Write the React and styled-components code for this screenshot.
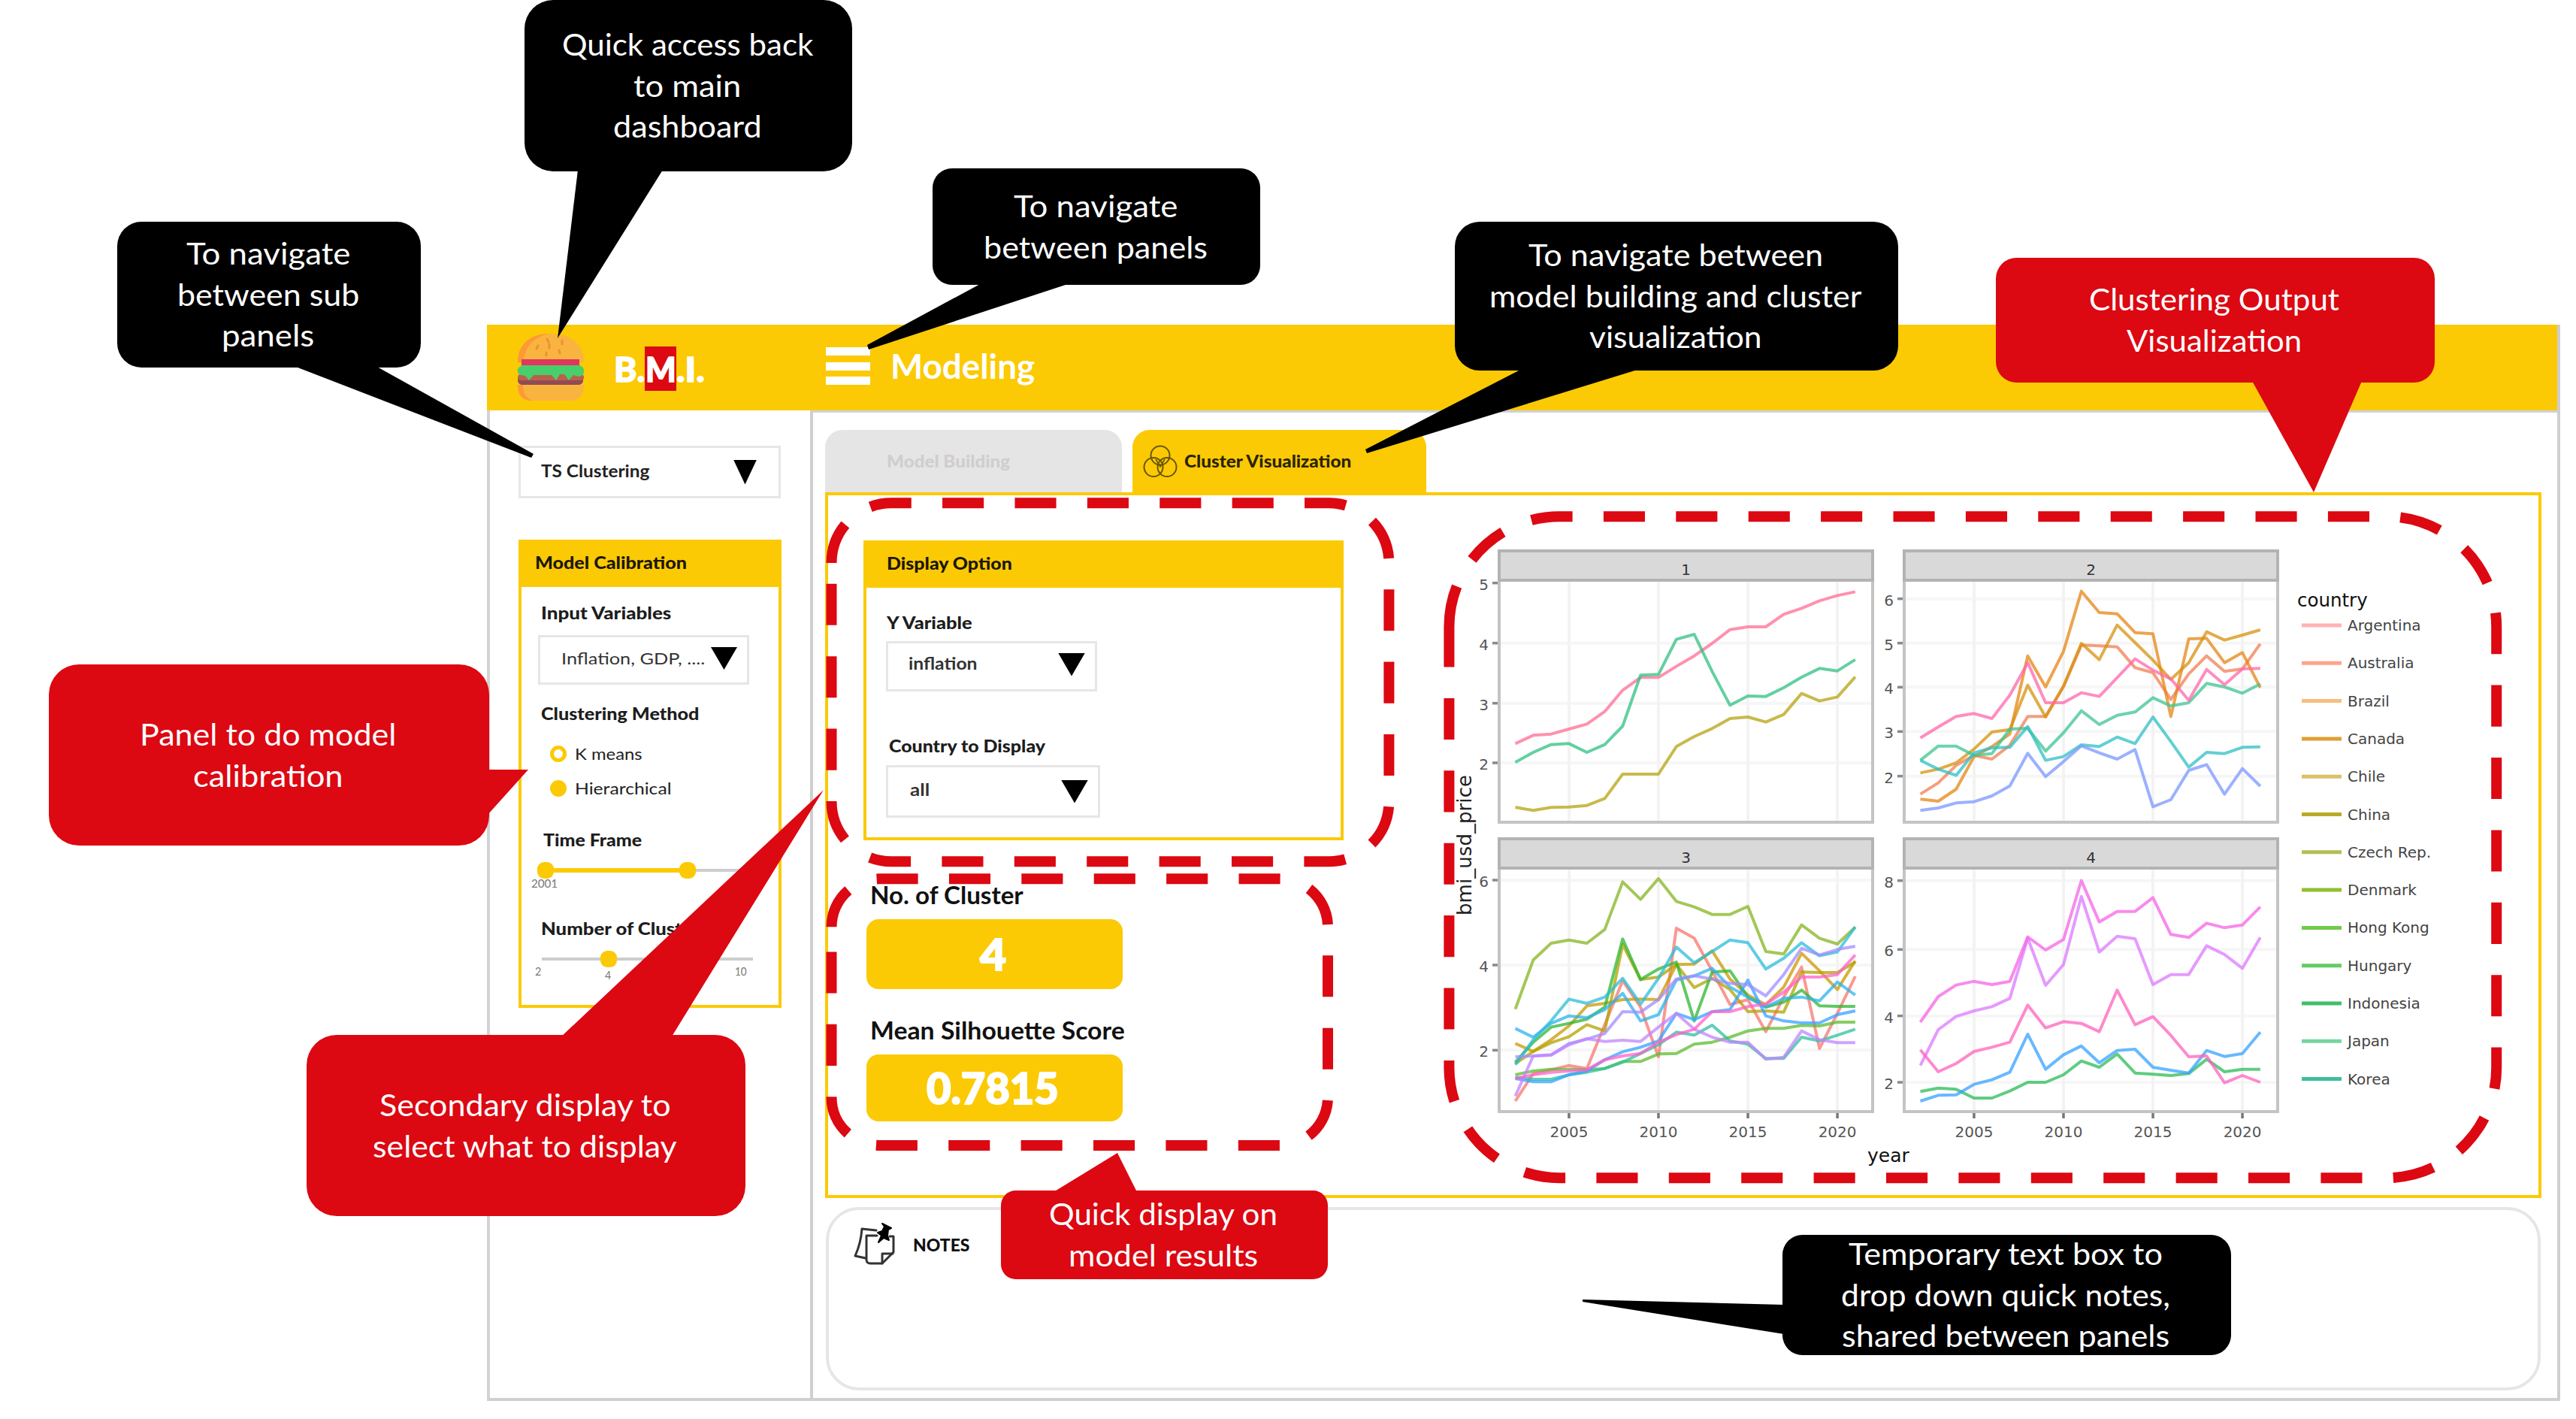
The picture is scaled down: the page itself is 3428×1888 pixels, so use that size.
import React, { useLayoutEffect, useRef, useState } from "react";
import styled, { createGlobalStyle } from "styled-components";

const YELLOW = "#fbca04";
const RED = "#dc0812";
const SANS = `Lato, "Open Sans", sans-serif`;
const CHART_FONT = `"DejaVu Sans", sans-serif`;

const GlobalStyle = createGlobalStyle`
  *, *::before, *::after { box-sizing: border-box; }
  body { margin: 0; background: #fff; font-family: ${SANS}; color: #111; }
`;

/* ---------- text set to a given measure ---------- */

const FitBox = styled.span`
  display: block;
  flex: none;
  width: ${(p) => p.$w}px;
  white-space: pre;
`;
const FitInner = styled.span`
  display: inline-block;
  transform-origin: 0 50%;
`;

function Fit({ w, children }) {
  const ref = useRef(null);
  const [scale, setScale] = useState(1);
  useLayoutEffect(() => {
    const natural = ref.current.offsetWidth;
    if (natural) setScale(w / natural);
  }, [w, children]);
  return (
    <FitBox $w={w}>
      <FitInner ref={ref} style={{ transform: `scaleX(${scale})` }}>
        {children}
      </FitInner>
    </FitBox>
  );
}

/* ---------- application frame ---------- */

const Page = styled.div`
  position: relative;
  width: 3428px;
  height: 1888px;
  overflow: hidden;
  padding: 432px 0 0 648px;
  background: #fff;
`;
const Frame = styled.div`
  width: 2759px;
  height: 1432px;
  display: flex;
  flex-direction: column;
  border-right: 4px solid #d0ced2;
  border-bottom: 4px solid #cfcfcf;
`;
const Header = styled.header`
  height: 114px;
  display: flex;
  align-items: center;
  padding-left: 40px;
  background: ${YELLOW};
  color: #fff;
`;
const Brand = styled.div`
  display: flex;
  align-items: center;
  margin-left: 39px;
  margin-right: 1px;
  padding-top: 3px;
  font-size: 46px;
  font-weight: 900;
  line-height: 59px;
  -webkit-text-stroke: 1.5px #fff;
`;
const BrandMark = styled.span`
  display: flex;
  justify-content: center;
  width: 42px;
  height: 59px;
  background: ${RED};
`;
const MenuIcon = styled.div`
  width: 59px;
  height: 50px;
  margin: 0 27px 4px 160px;
  display: flex;
  flex-direction: column;
  justify-content: space-between;
`;
const MenuBar = styled.span`
  height: 11px;
  background: #fff;
`;
const PageTitle = styled.h1`
  margin: 0 0 5px;
  font-size: 46px;
  line-height: 56px;
  font-weight: 700;
`;
const Body = styled.div`
  flex: 1;
  display: flex;
`;
const Sidebar = styled.aside`
  width: 430px;
  padding: 47px 0 0 38px;
  border-left: 4px solid #d3d3d3;
`;
const Main = styled.main`
  flex: 1;
  padding: 23px 0 0 16px;
  border-top: 3px solid #cfd0dc;
  border-left: 4px solid #cfcfcf;
`;

/* ---------- controls ---------- */

const SelectBox = styled.div`
  width: ${(p) => p.$w}px;
  height: ${(p) => p.$h}px;
  margin-top: ${(p) => p.$mt || 0}px;
  padding: 0 ${(p) => p.$pr}px 0 ${(p) => p.$pl}px;
  display: flex;
  align-items: center;
  justify-content: space-between;
  border: 3px solid #e6e6e6;
  background: #fff;
`;
const SelectText = styled.span`
  padding-bottom: ${(p) => p.$up}px;
  font-size: 22px;
  line-height: 28px;
  font-weight: ${(p) => p.$weight || 400};
  color: ${(p) => p.$color || "#333"};
`;
const Arrow = styled.span`
  width: ${(p) => p.$w || 36}px;
  height: ${(p) => p.$h || 31}px;
  margin-bottom: ${(p) => p.$up || 0}px;
  background: #000;
  clip-path: polygon(0 0, 100% 0, 50% 100%);
`;

function Select({ w, h, mt, pl, pr, text, textW, up, arrow = {}, weight, color }) {
  return (
    <SelectBox $w={w} $h={h} $mt={mt} $pl={pl} $pr={pr}>
      <SelectText $up={up} $weight={weight} $color={color}>
        <Fit w={textW}>{text}</Fit>
      </SelectText>
      <Arrow $w={arrow.w} $h={arrow.h} $up={arrow.up} />
    </SelectBox>
  );
}

const Card = styled.section`
  width: ${(p) => p.$w}px;
  height: ${(p) => p.$h}px;
  margin-top: ${(p) => p.$mt || 0}px;
  border: 4px solid ${YELLOW};
  background: #fff;
`;
const CardTitle = styled.div`
  height: 59px;
  padding: 0 0 7px ${(p) => p.$pl}px;
  display: flex;
  align-items: center;
  background: ${YELLOW};
  font-size: 23px;
  font-weight: 900;
  color: #1c1704;
`;
const CardBody = styled.div`
  padding-left: ${(p) => p.$pl}px;
`;
const Label = styled.div`
  margin: ${(p) => p.$mt}px 0 0 ${(p) => p.$ml || 4}px;
  font-size: 23px;
  line-height: 28px;
  font-weight: 900;
  color: #1d1d1d;
`;
const RadioRow = styled.div`
  display: flex;
  align-items: center;
  gap: 11px;
  height: 28px;
  margin: ${(p) => p.$mt}px 0 0 16px;
  font-size: 22px;
  line-height: 30px;
  color: #222;
`;
const Radio = styled.span`
  width: 22px;
  height: 22px;
  border-radius: 50%;
  border: 5px solid ${YELLOW};
  background: ${(p) => (p.$on ? YELLOW : "#fff")};
`;
const SliderRow = styled.div`
  display: flex;
  align-items: center;
  height: 22px;
  margin: 16px 0 0 ${(p) => p.$ml}px;
`;
const Track = styled.span`
  width: ${(p) => p.$w}px;
  height: ${(p) => (p.$on ? 6 : 4)}px;
  background: ${(p) => (p.$on ? YELLOW : "#cdcdcd")};
`;
const Handle = styled.span`
  width: 22px;
  height: 22px;
  border-radius: 9px;
  background: ${YELLOW};
`;
const ScaleRow = styled.div`
  display: flex;
  margin: ${(p) => p.$mt}px 0 0 ${(p) => p.$ml}px;
  font-size: 16px;
  line-height: 20px;
  color: #777;
`;
const ScaleMark = styled.span`
  margin-left: ${(p) => p.$ml || 0}px;
  padding-top: ${(p) => p.$drop || 0}px;
`;

/* ---------- main area ---------- */

const Tabs = styled.nav`
  display: flex;
  gap: 14px;
`;
const Tab = styled.div`
  width: ${(p) => p.$w}px;
  height: 83px;
  display: flex;
  align-items: center;
  gap: 9px;
  padding: 0 0 0 ${(p) => p.$pl}px;
  border-radius: 23px 23px 0 0;
  background: ${(p) => (p.$active ? YELLOW : "#e5e5e5")};
  color: ${(p) => (p.$active ? "#2b2305" : "#d0cdce")};
  font-size: 22px;
  font-weight: 900;
  line-height: 28px;
`;
const Panel = styled.div`
  width: 2284px;
  height: 939px;
  display: flex;
  border: 4px solid ${YELLOW};
`;
const ResultColumn = styled.div`
  width: 828px;
  padding: 60px 0 0 47px;
`;
const ResultLabel = styled.div`
  margin: ${(p) => p.$mt}px 0 0 9px;
  font-size: 33px;
  line-height: 40px;
  font-weight: 700;
  color: #111;
`;
const ResultValue = styled.div`
  width: 341px;
  height: ${(p) => p.$h}px;
  margin: 13px 0 0 4px;
  display: flex;
  align-items: center;
  justify-content: center;
  padding: 0 5px 2px 0;
  border-radius: 16px;
  background: ${YELLOW};
  color: #fff;
  font-size: 57px;
  font-weight: 900;
  line-height: 70px;
  -webkit-text-stroke: 2px #fff;
`;
const ChartArea = styled.svg`
  display: block;
  width: 1370px;
  height: 840px;
  margin-top: 61px;
  font-family: ${CHART_FONT};
`;
const Notes = styled.section`
  width: 2282px;
  height: 244px;
  margin: 12px 0 0 1px;
  padding: 17px 0 0 33px;
  display: flex;
  align-items: flex-start;
  gap: 22px;
  border: 4px solid #e6e6e6;
  border-radius: 44px;
`;
const NotesTitle = styled.div`
  margin-top: 16px;
  font-size: 22px;
  font-weight: 900;
  line-height: 28px;
`;

/* ---------- annotation layer ---------- */

const Overlay = styled.svg`
  position: absolute;
  left: 0;
  top: 0;
  width: 3428px;
  height: 1888px;
`;
const Bubble = styled.div`
  position: absolute;
  left: ${(p) => p.$x}px;
  top: ${(p) => p.$y}px;
  width: ${(p) => p.$w}px;
  height: ${(p) => p.$h}px;
  display: flex;
  flex-direction: column;
  align-items: center;
  justify-content: center;
  padding-right: 3px;
  border-radius: ${(p) => Math.min(p.$w, p.$h) / 6}px;
  background: ${(p) => p.$bg};
  color: #fff;
  font-size: 41px;
  line-height: 54.8px;
`;

const CALLOUTS = [
  { x: 698, y: 0, w: 436, h: 228, bg: "#000", tail: "769,226 882,226 742,450", lines: [["Quick access back", 334], ["to main", 143], ["dashboard", 198]] },
  { x: 156, y: 295, w: 404, h: 194, bg: "#000", tail: "391,487 500,487 710,604 707,609", lines: [["To navigate", 218], ["between sub", 242], ["panels", 123]] },
  { x: 1241, y: 224, w: 436, h: 155, bg: "#000", tail: "1306,377 1424,377 1156,465 1154,459", lines: [["To navigate", 218], ["between panels", 298]] },
  { x: 1936, y: 295, w: 590, h: 198, bg: "#000", tail: "2025,491 2182,491 1819,603 1817,598", lines: [["To navigate between", 392], ["model building and cluster", 495], ["visualization", 230]] },
  { x: 2656, y: 343, w: 584, h: 166, bg: RED, tail: "2997,507 3143,507 3079,655", lines: [["Clustering Output", 333], ["Visualization", 233]] },
  { x: 65, y: 884, w: 586, h: 241, bg: RED, tail: "649,1024 703,1024 649,1084", lines: [["Panel to do model", 341], ["calibration", 200]] },
  { x: 408, y: 1377, w: 584, h: 241, bg: RED, tail: "747,1379 894,1379 1096,1051", lines: [["Secondary display to", 388], ["select what to display", 405]] },
  { x: 1332, y: 1584, w: 435, h: 118, bg: RED, tail: "1402,1586 1513,1586 1487,1534", lines: [["Quick display on", 304], ["model results", 252]] },
  { x: 2372, y: 1643, w: 597, h: 160, bg: "#000", tail: "2374,1736 2374,1775 2106,1732 2106,1729", lines: [["Temporary text box to", 418], ["drop down quick notes,", 438], ["shared between panels", 436]] },
];

const OUTLINES = [
  { l: 1106.5, t: 669.3, r: 1848.4, b: 1146.2, rad: 79.6 },
  { l: 1106.5, t: 1169.3, r: 1767, b: 1524, rad: 64 },
  { l: 1928.4, t: 687.2, r: 3322.2, b: 1567.2, rad: 146.8 },
];

function outlinePath({ l, t, r, b, rad }) {
  return `M${l} ${t + rad}A${rad} ${rad} 0 0 1 ${l + rad} ${t}H${r - rad}A${rad} ${rad} 0 0 1 ${r} ${t + rad}V${b - rad}A${rad} ${rad} 0 0 1 ${r - rad} ${b}H${l + rad}A${rad} ${rad} 0 0 1 ${l} ${b - rad}Z`;
}

function Annotations() {
  return (
    <>
      <Overlay viewBox="0 0 3428 1888">
        {OUTLINES.map((o) => (
          <path key={o.t} d={outlinePath(o)} fill="none" stroke={RED} strokeWidth="14" strokeDasharray="55.1 41.3" />
        ))}
        {CALLOUTS.map((c) => (
          <polygon key={c.tail} points={c.tail} fill={c.bg} />
        ))}
      </Overlay>
      {CALLOUTS.map((c) => (
        <Bubble key={c.tail} $x={c.x} $y={c.y} $w={c.w} $h={c.h} $bg={c.bg}>
          {c.lines.map(([text, w]) => (
            <Fit key={text} w={w}>{text}</Fit>
          ))}
        </Bubble>
      ))}
    </>
  );
}

/* ---------- charts ---------- */

/* Each facet covers 2002-2021; series are drawn in thirds of a pixel below the facet's own origin. */
const FACETS = [
  {
    name: "1", x: 1993, top: 731, bottom: 1096, origin: 680,
    ticks: [["5", 287], ["4", 527], ["3", 767], ["2", 1005]],
    series: [
      ["#ff6c91", [928, 895, 890, 870, 850, 800, 715, 664, 664, 620, 578, 528, 473, 462, 462, 412, 388, 358, 337, 322]],
      ["#2fc083", [1003, 963, 932, 928, 963, 932, 858, 655, 652, 512, 492, 640, 775, 738, 740, 705, 663, 628, 638, 593]],
      ["#b5a310", [1182, 1195, 1183, 1181, 1175, 1147, 1050, 1050, 1050, 940, 900, 868, 828, 822, 842, 812, 728, 758, 742, 662]],
    ],
  },
  {
    name: "2", x: 2532, top: 731, bottom: 1096, origin: 680,
    ticks: [["6", 350], ["5", 527], ["4", 703], ["3", 880], ["2", 1058]],
    series: [
      ["#f27d53", [1130, 1085, 1015, 975, 990, 935, 820, 820, 700, 535, 538, 542, 625, 645, 752, 650, 578, 640, 630, 530]],
      ["#e68613", [1150, 1158, 1110, 980, 940, 890, 578, 702, 560, 320, 405, 410, 485, 490, 820, 510, 508, 605, 565, 705]],
      ["#d6920c", [1045, 1030, 1005, 950, 882, 872, 695, 822, 700, 528, 593, 455, 525, 595, 672, 605, 482, 515, 495, 474]],
      ["#3cc492", [995, 938, 938, 975, 968, 870, 867, 958, 885, 797, 852, 815, 802, 745, 778, 765, 688, 702, 727, 690]],
      ["#2fbfc4", [995, 1030, 1055, 965, 945, 943, 860, 995, 980, 933, 940, 902, 928, 822, 920, 1022, 963, 968, 943, 941]],
      ["#7997ff", [1195, 1185, 1165, 1160, 1137, 1097, 967, 1060, 1000, 937, 965, 990, 952, 1180, 1152, 1035, 1012, 1130, 1028, 1098]],
      ["#ff67a9", [905, 862, 820, 808, 828, 735, 605, 765, 765, 725, 740, 665, 590, 635, 670, 755, 632, 693, 630, 628]],
    ],
  },
  {
    name: "3", x: 1993, top: 1114, bottom: 1481, origin: 1100,
    ticks: [["6", 213], ["4", 552], ["2", 892]],
    years: true,
    series: [
      ["#f8766d", [1095, 985, 970, 953, 965, 790, 615, 720, 918, 405, 445, 575, 710, 690, 818, 680, 560, 885, 745, 597]],
      ["#c99800", [865, 897, 850, 795, 715, 705, 690, 688, 690, 550, 548, 495, 608, 672, 710, 640, 505, 575, 650, 535]],
      ["#b2a100", [945, 897, 862, 838, 790, 815, 470, 610, 600, 550, 642, 605, 650, 738, 735, 740, 580, 582, 582, 540]],
      ["#86b420", [728, 532, 465, 452, 465, 410, 220, 290, 207, 298, 320, 350, 350, 318, 498, 508, 392, 445, 468, 400]],
      ["#5dbb2f", [990, 975, 968, 968, 970, 965, 937, 937, 907, 905, 868, 860, 840, 815, 805, 805, 793, 795, 780, 780]],
      ["#2db52f", [940, 860, 800, 785, 768, 720, 448, 610, 568, 540, 775, 580, 575, 680, 720, 700, 652, 715, 717, 717]],
      ["#2dc0a0", [1000, 1008, 1008, 990, 980, 965, 940, 905, 870, 820, 832, 792, 855, 868, 925, 925, 840, 855, 832, 808]],
      ["#2bbcd8", [950, 850, 775, 688, 705, 680, 605, 708, 605, 480, 543, 498, 452, 463, 568, 525, 463, 515, 500, 400]],
      ["#2bb3ee", [805, 840, 785, 755, 762, 730, 665, 775, 750, 612, 595, 565, 640, 680, 720, 685, 680, 695, 620, 672]],
      ["#35a2ff", [1005, 1018, 1018, 990, 975, 930, 898, 880, 855, 745, 770, 738, 730, 612, 755, 775, 783, 783, 750, 735]],
      ["#a08cff", [918, 915, 910, 865, 848, 825, 738, 740, 690, 608, 595, 608, 625, 630, 675, 590, 485, 512, 490, 477]],
      ["#c084ff", [1075, 915, 912, 870, 846, 857, 852, 857, 800, 745, 808, 840, 860, 860, 928, 920, 815, 850, 862, 862]],
      ["#ff61cc", [1005, 990, 980, 975, 970, 930, 915, 905, 860, 830, 808, 738, 738, 718, 708, 660, 600, 600, 590, 512]],
    ],
  },
  {
    name: "4", x: 2532, top: 1114, bottom: 1481, origin: 1100,
    ticks: [["8", 215], ["6", 490], ["4", 755], ["2", 1020]],
    years: true,
    series: [
      ["#2bbb58", [1057, 1043, 1048, 1083, 1083, 1055, 1020, 1020, 990, 935, 960, 907, 983, 988, 993, 985, 928, 978, 968, 968]],
      ["#35a2ff", [1095, 1072, 1070, 1028, 1010, 980, 828, 968, 910, 875, 942, 893, 888, 960, 972, 983, 893, 917, 905, 820]],
      ["#dc78ff", [953, 810, 757, 735, 718, 685, 445, 633, 550, 278, 500, 437, 447, 630, 590, 590, 475, 510, 565, 442]],
      ["#f763e6", [780, 678, 632, 617, 630, 617, 440, 492, 450, 215, 380, 338, 338, 283, 430, 442, 385, 403, 392, 320]],
      ["#ff62bc", [890, 978, 945, 897, 880, 860, 712, 803, 778, 785, 818, 652, 790, 758, 833, 918, 915, 1022, 993, 1020]],
    ],
  },
];
const YEARS = [2005, 2010, 2015, 2020];
const FACET_W = 501;
const yearX = (facet, year) => facet.x + 23.5 + (year - 2002) * 23.81;

const LEGEND = [
  ["Argentina", "#ffb3b3"], ["Australia", "#ffa587"], ["Brazil", "#f5bf7d"], ["Canada", "#e0a030"],
  ["Chile", "#dcc067"], ["China", "#b9ab26"], ["Czech Rep.", "#b4be50"], ["Denmark", "#93bf2f"],
  ["Hong Kong", "#74c84a"], ["Hungary", "#62cc62"], ["Indonesia", "#40bf6b"], ["Japan", "#74d6a0"],
  ["Korea", "#3cc09a"],
];

function Facet({ f }) {
  const right = f.x + FACET_W;
  const stripBottom = f.top + 41;
  return (
    <g>
      {f.ticks.map(([label, v]) => {
        const y = f.origin + v / 3;
        return (
          <g key={label}>
            {y > stripBottom + 6 && <line x1={f.x} x2={right} y1={y} y2={y} stroke="#f6f6f6" strokeWidth="4" />}
            <line x1={f.x - 7} x2={f.x} y1={y} y2={y} stroke="#8a8a8a" strokeWidth="3.5" />
            <text x={f.x - 18.5} y={y + 9} textAnchor="middle" fontSize="20" fill="#555">{label}</text>
          </g>
        );
      })}
      {YEARS.map((year) => {
        const x = yearX(f, year);
        return (
          <g key={year}>
            <line x1={x} x2={x} y1={stripBottom} y2={f.bottom} stroke="#f3f3f3" strokeWidth="4" />
            {f.years && (
              <>
                <line x1={x} x2={x} y1={f.bottom} y2={f.bottom + 7} stroke="#777" strokeWidth="3.5" />
                <text x={x} y="1513" textAnchor="middle" fontSize="20" fill="#555">{year}</text>
              </>
            )}
          </g>
        );
      })}
      {f.series.map(([color, values], i) => (
        <polyline
          key={i}
          fill="none"
          stroke={color}
          strokeWidth="4"
          strokeOpacity="0.75"
          strokeLinejoin="round"
          points={values.map((v, n) => `${yearX(f, 2002 + n)},${f.origin + v / 3}`).join(" ")}
        />
      ))}
      <rect x={f.x + 2} y={f.top + 2} width={FACET_W - 4} height={f.bottom - f.top - 4} fill="none" stroke="#c4c4c4" strokeWidth="4" />
      <rect x={f.x + 2} y={f.top + 2} width={FACET_W - 4} height="39" fill="#d9d9d9" stroke="#b3b3b3" strokeWidth="4" />
      <text x={f.x + FACET_W / 2} y={f.top + 34} textAnchor="middle" fontSize="20" fill="#333">{f.name}</text>
    </g>
  );
}

function ClusterCharts() {
  return (
    <ChartArea viewBox="1930 720 1370 840">
      {FACETS.map((f) => <Facet key={f.name} f={f} />)}
      <text transform="translate(1958 1218) rotate(-90)" fontSize="26" textLength="187" fill="#222">bmi_usd_price</text>
      <text x="2485" y="1546" fontSize="25" fill="#111">year</text>
      <text x="3057" y="807" fontSize="24.5" fill="#111">country</text>
      {LEGEND.map(([name, color], i) => {
        const y = 832 + i * 50.3;
        return (
          <g key={name}>
            <line x1="3063" x2="3116" y1={y} y2={y} stroke={color} strokeWidth="5" />
            <text x="3124" y={y + 7} fontSize="20" fill="#444">{name}</text>
          </g>
        );
      })}
    </ChartArea>
  );
}

/* ---------- icons ---------- */

function BurgerIcon() {
  return (
    <svg width="90" height="90" viewBox="0 0 90 90">
      <path d="M1 38C1 14 18 0 45 0s44 14 44 38z" fill="#f9b43f" />
      <path d="M1 38C1 14 18 0 42 0C20 6 11 18 8 38z" fill="#fb9a36" />
      <g stroke="#ee8f35" strokeWidth="3" strokeLinecap="round">
        <path d="M40 7l2 4M28 16l-2 4M43 14v5M60 9v5M39 25v4M56 22l1 4" />
      </g>
      <path d="M6 34h77v9H6z" fill="#e0365f" />
      <path d="M8 62h72l8-6v6c0 4-3 6-6 6H7c-4 0-6-3-6-6 0-5 3-8 7-8z" fill="#924b52" />
      <rect x="1" y="54" width="88" height="8" rx="4" fill="#b9604c" />
      <path d="M7 42h76c9 3 8 14-1 15l-7-2-6 7-6-8-6 0-5 8-6-7-24 0-6 7-5-6-6-1C-1 53-1 45 7 42z" fill="#48cf6c" />
      <path d="M1 68h88c0 13-5 21-17 21H18C6 89 1 81 1 68z" fill="#f9b43f" />
      <path d="M1 68h7c0 11 4 17 12 21C7 89 1 82 1 68z" fill="#fb9a36" />
    </svg>
  );
}

function ClusterIcon() {
  return (
    <svg width="46" height="44" viewBox="0 0 46 44" fill="none" stroke="#6a5607" strokeWidth="2">
      <circle cx="23" cy="14" r="12.5" />
      <circle cx="14" cy="29.5" r="12.5" />
      <circle cx="32" cy="29.5" r="12.5" />
      <path d="M17 19l6 10 6-10" strokeWidth="1.6" />
    </svg>
  );
}

function NotesIcon() {
  return (
    <svg width="57" height="56" viewBox="0 0 57 56" fill="none" stroke="#333" strokeWidth="3" strokeLinejoin="round" strokeLinecap="round">
      <path d="M30 10L11 8C10 22 7 33 2 44l14 3" />
      <path d="M31 17H17v32c0 3 2 5 5 5h16l15-15V18h-5" />
      <path d="M38 54V41h14" />
      <path d="M38 1l12 6-4 2-1 8 2 6-7-3-7 6 4-9-5-4 6-2 3-6z" fill="#000" stroke="#000" strokeWidth="2" />
    </svg>
  );
}

/* ---------- page ---------- */

function CalibrationPanel() {
  return (
    <Card $w={350} $h={623} $mt={55}>
      <CardTitle $pl={18}><Fit w={202}>Model Calibration</Fit></CardTitle>
      <CardBody $pl={22}>
        <Label $mt={20}><Fit w={173}>Input Variables</Fit></Label>
        <Select w={281} h={66} mt={16} pl={28} pr={13} text="Inflation, GDP, ...." textW={191} up={4} arrow={{ w: 35, h: 30, up: 4 }} />
        <Label $mt={24}><Fit w={210}>Clustering Method</Fit></Label>
        <RadioRow $mt={26}><Radio /><Fit w={90}>K means</Fit></RadioRow>
        <RadioRow $mt={18}><Radio $on /><Fit w={129}>Hierarchical</Fit></RadioRow>
        <Label $mt={40} $ml={7}><Fit w={131}>Time Frame</Fit></Label>
        <SliderRow $ml={-1}>
          <Handle /><Track $w={167} $on /><Handle /><Track $w={77} />
        </SliderRow>
        <ScaleRow $mt={-4} $ml={-9}><Fit w={35}>2001</Fit></ScaleRow>
        <Label $mt={36}><Fit w={222}>Number of Clusters</Fit></Label>
        <SliderRow $ml={5}>
          <Track $w={78} /><Handle /><Track $w={181} />
        </SliderRow>
        <ScaleRow $mt={-5} $ml={-4}>
          <ScaleMark><Fit w={8}>2</Fit></ScaleMark>
          <ScaleMark $ml={85} $drop={5}><Fit w={8}>4</Fit></ScaleMark>
          <ScaleMark $ml={165}><Fit w={16}>10</Fit></ScaleMark>
        </ScaleRow>
      </CardBody>
    </Card>
  );
}

export default function App() {
  return (
    <Page>
      <GlobalStyle />
      <Frame>
        <Header>
          <BurgerIcon />
          <Brand>
            <Fit w={41}>B.</Fit>
            <BrandMark><Fit w={41}>M</Fit></BrandMark>
            <Fit w={38}>.I.</Fit>
          </Brand>
          <MenuIcon><MenuBar /><MenuBar /><MenuBar /></MenuIcon>
          <PageTitle><Fit w={192}>Modeling</Fit></PageTitle>
        </Header>
        <Body>
          <Sidebar>
            <Select w={349} h={70} pl={27} pr={29} text="TS Clustering" textW={144} up={3} arrow={{ w: 31, h: 33 }} weight={700} color="#222" />
            <CalibrationPanel />
          </Sidebar>
          <Main>
            <Tabs>
              <Tab $w={395} $pl={82}><Fit w={164}>Model Building</Fit></Tab>
              <Tab $w={391} $pl={14} $active><ClusterIcon /><Fit w={222}>Cluster Visualization</Fit></Tab>
            </Tabs>
            <Panel>
              <ResultColumn>
                <Card $w={639} $h={399}>
                  <CardTitle $pl={27}><Fit w={167}>Display Option</Fit></CardTitle>
                  <CardBody $pl={26}>
                    <Label $mt={32} $ml={1}><Fit w={114}>Y Variable</Fit></Label>
                    <Select w={281} h={67} mt={11} pl={27} pr={13} text="inflation" textW={91} up={7} arrow={{ up: 5 }} weight={700} />
                    <Label $mt={58}><Fit w={208}>Country to Display</Fit></Label>
                    <Select w={285} h={70} mt={12} pl={29} pr={13} text="all" textW={26} up={4} weight={700} />
                  </CardBody>
                </Card>
                <ResultLabel $mt={52}><Fit w={204}>No. of Cluster</Fit></ResultLabel>
                <ResultValue $h={93}><Fit w={35}>4</Fit></ResultValue>
                <ResultLabel $mt={34}><Fit w={339}>Mean Silhouette Score</Fit></ResultLabel>
                <ResultValue $h={89}><Fit w={176}>0.7815</Fit></ResultValue>
              </ResultColumn>
              <ClusterCharts />
            </Panel>
            <Notes>
              <NotesIcon />
              <NotesTitle><Fit w={75}>NOTES</Fit></NotesTitle>
            </Notes>
          </Main>
        </Body>
      </Frame>
      <Annotations />
    </Page>
  );
}
